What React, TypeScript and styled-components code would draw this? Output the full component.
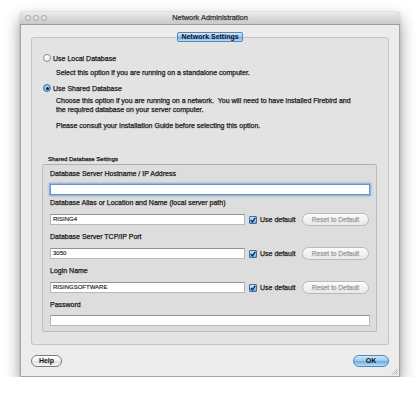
import React from "react";
import styled, { createGlobalStyle, css } from "styled-components";

const Global = createGlobalStyle`
  html, body { margin: 0; padding: 0; background: #ffffff; }
  body {
    font-family: "Liberation Sans", Arial, sans-serif;
    color: #1a1a1a;
    -webkit-text-stroke: 0.25px currentColor;
  }
`;

const Page = styled.div`
  padding: 12px 20px 0 20px;
  width: 380px;
`;

const Window = styled.div`
  position: relative;
  width: 380px;
  box-sizing: border-box;
  border: 1px solid #a4a4a4;
  border-top: none;
  border-radius: 4px 4px 0 0;
  box-shadow: 0 7px 16px rgba(0, 0, 0, 0.42), 0 0 2px rgba(0, 0, 0, 0.2);
  background: #ececec;
`;

const TitleBar = styled.div`
  height: 12px;
  display: grid;
  grid-template-columns: 1fr auto 1fr;
  align-items: center;
  background: linear-gradient(#ececec, #d6d6d6 60%, #c9c9c9);
  border-bottom: 1px solid #9a9a9a;
  border-radius: 4px 4px 0 0;
  margin: 0 -1px;
`;

const Lights = styled.div`
  display: flex;
  gap: 2px;
  padding-left: 5px;
`;

const Light = styled.span`
  width: 6px;
  height: 6px;
  border-radius: 50%;
  box-sizing: border-box;
  border: 1px solid #a9a9a9;
  background: radial-gradient(circle at 50% 35%, #f4f4f4, #cfcfcf);
`;

const Title = styled.div`
  font-size: 7.4px;
  line-height: 12px;
  color: #333;
`;

const Body = styled.div`
  padding: 7px 10px 9px 10px;
`;

const TabHeader = styled.div`
  display: flex;
  justify-content: center;
  height: 10px;
  margin-bottom: -5px;
  position: relative;
  z-index: 1;
`;

const aquaBlue = css`
  background: linear-gradient(#d2e8fb 0%, #9ccbf3 45%, #6fb1ea 55%, #b4dcfb 100%);
  border: 1px solid #5a83b6;
`;

const TabButton = styled.div`
  ${aquaBlue};
  box-sizing: border-box;
  height: 10px;
  width: 66px;
  border-radius: 2px;
  font-size: 7px;
  font-weight: bold;
  line-height: 8px;
  text-align: center;
  color: #111;
  -webkit-text-stroke: 0;
`;

const TabBox = styled.div`
  border: 1px solid #c4c4c4;
  border-radius: 3px;
  background: #e3e3e3;
  padding: 15px 11px 12px 11px;
`;

const RadioRow = styled.div<{ $gapTop?: number }>`
  display: flex;
  align-items: center;
  gap: 2px;
  height: 10px;
  font-size: 7px;
  margin-top: ${(p) => p.$gapTop ?? 0}px;
`;

const RadioDot = styled.span<{ $on?: boolean }>`
  width: 8px;
  height: 8px;
  border-radius: 50%;
  box-sizing: border-box;
  display: flex;
  align-items: center;
  justify-content: center;
  ${(p) =>
    p.$on
      ? css`
          border: 1px solid #3f6ea8;
          background: radial-gradient(circle at 50% 40%, #b9defb, #5ea6e6);
        `
      : css`
          border: 1px solid #8d8d8d;
          background: linear-gradient(#ffffff, #ececec);
        `}
`;

const RadioCenter = styled.span`
  width: 3px;
  height: 3px;
  border-radius: 50%;
  background: #14233c;
`;

const Desc = styled.p<{ $top: number; $lh?: number }>`
  margin: ${(p) => p.$top}px 0 0 13px;
  font-size: 7px;
  line-height: ${(p) => p.$lh ?? 10}px;
`;

const GroupLabel = styled.div`
  margin: 24px 0 1px 5px;
  font-size: 6px;
  line-height: 8px;
`;

const GroupBox = styled.div`
  margin-left: -1px;
  border: 1px solid #bcbcbc;
  border-top-color: #b0b0b0;
  border-radius: 2px;
  background: #dddddd;
  padding: 4px 6px 5px 7px;
`;

const Field = styled.div<{ $bottom?: number }>`
  margin-bottom: ${(p) => p.$bottom ?? 5}px;
`;

const FieldLabel = styled.div`
  font-size: 7px;
  line-height: 10px;
  height: 10px;
  margin-bottom: 5px;
`;

const Row = styled.div`
  display: flex;
  align-items: center;
  height: 15px;
  margin-top: -1px;
`;

const Input = styled.div<{ $focus?: boolean; $width?: number }>`
  box-sizing: border-box;
  height: 11px;
  ${(p) => (p.$width ? `width: ${p.$width}px;` : "flex: 1;")}
  background: #ffffff;
  border: 1px solid #b8b8b8;
  border-top-color: #929292;
  font-size: 6px;
  line-height: 9px;
  padding-left: 2px;
  color: #222;
  -webkit-text-stroke: 0.15px currentColor;
  ${(p) =>
    p.$focus &&
    css`
      border-color: #6f8fbd;
      box-shadow: 0 0 0 1px #92b6e4, 0 0 2px 1px rgba(110, 160, 225, 0.7);
    `}
`;

const Check = styled.span`
  margin-left: 4px;
  width: 8px;
  height: 8px;
  box-sizing: border-box;
  border: 1px solid #3f6ea8;
  border-radius: 1px;
  background: linear-gradient(#cde6fb, #5fa5e6);
  display: flex;
  align-items: center;
  justify-content: center;
`;

const CheckLabel = styled.span`
  margin-left: 3px;
  font-size: 7px;
  width: 36px;
  white-space: nowrap;
`;

const ResetButton = styled.div`
  margin-left: 6px;
  box-sizing: border-box;
  width: 67px;
  height: 13px;
  border-radius: 7px;
  border: 1px solid #b9b9b9;
  background: linear-gradient(#fbfbfb, #e9e9e9);
  color: #9b9b9b;
  font-size: 6.6px;
  line-height: 11px;
  text-align: center;
`;

const Footer = styled.div`
  display: flex;
  justify-content: space-between;
  align-items: center;
  margin-top: 10px;
`;

const PushButton = styled.div<{ $primary?: boolean; $w: number }>`
  box-sizing: border-box;
  width: ${(p) => p.$w}px;
  height: 12px;
  border-radius: 6px;
  font-size: 7px;
  font-weight: bold;
  line-height: 10px;
  text-align: center;
  color: #111;
  -webkit-text-stroke: 0;
  ${(p) =>
    p.$primary
      ? aquaBlue
      : css`
          border: 1px solid #7c7c7c;
          background: linear-gradient(#ffffff, #f1f1f1 50%, #e2e2e2 55%, #f7f7f7);
        `}
`;

const Grip = styled.svg`
  position: absolute;
  right: 1px;
  bottom: 1px;
`;

const CheckMark = () => (
  <svg width="6" height="6" viewBox="0 0 6 6">
    <path d="M0.8 3.1 L2.4 4.8 L5.4 0.6" fill="none" stroke="#0d1a30" strokeWidth="1.2" />
  </svg>
);

const DefaultRow = ({ value }: { value: string }) => (
  <Row>
    <Input $width={195}>{value}</Input>
    <Check>
      <CheckMark />
    </Check>
    <CheckLabel>Use default</CheckLabel>
    <ResetButton>Reset to Default</ResetButton>
  </Row>
);

export default function App() {
  return (
    <>
      <Global />
      <Page>
        <Window>
          <TitleBar>
            <Lights>
              <Light />
              <Light />
              <Light />
            </Lights>
            <Title>Network Administration</Title>
            <div />
          </TitleBar>
          <Body>
            <TabHeader>
              <TabButton>Network Settings</TabButton>
            </TabHeader>
            <TabBox>
              <RadioRow>
                <RadioDot />
                <span>Use Local Database</span>
              </RadioRow>
              <Desc $top={5}>Select this option if you are running on a standalone computer.</Desc>
              <RadioRow $gapTop={5}>
                <RadioDot $on>
                  <RadioCenter />
                </RadioDot>
                <span>Use Shared Database</span>
              </RadioRow>
              <Desc $top={3} $lh={9}>
                Choose this option if you are running on a network.&nbsp; You will need to have installed Firebird and
                <br />
                the required database on your server computer.
              </Desc>
              <Desc $top={7}>Please consult your Installation Guide before selecting this option.</Desc>
              <GroupLabel>Shared Database Settings</GroupLabel>
              <GroupBox>
                <Field $bottom={3}>
                  <FieldLabel>Database Server Hostname / IP Address</FieldLabel>
                  <Input $focus />
                </Field>
                <Field>
                  <FieldLabel>Database Alias or Location and Name (local server path)</FieldLabel>
                  <DefaultRow value="RISING4" />
                </Field>
                <Field>
                  <FieldLabel>Database Server TCP/IP Port</FieldLabel>
                  <DefaultRow value="3050" />
                </Field>
                <Field>
                  <FieldLabel>Login Name</FieldLabel>
                  <DefaultRow value="RISINGSOFTWARE" />
                </Field>
                <Field $bottom={0}>
                  <FieldLabel>Password</FieldLabel>
                  <Input />
                </Field>
              </GroupBox>
            </TabBox>
            <Footer>
              <PushButton $w={31}>Help</PushButton>
              <PushButton $w={36} $primary>
                OK
              </PushButton>
            </Footer>
          </Body>
          <Grip width="7" height="7" viewBox="0 0 7 7">
            <path d="M6.5 1 L1 6.5 M6.5 3.5 L3.5 6.5 M6.5 5.5 L5.5 6.5" stroke="#9a9a9a" strokeWidth="0.7" />
          </Grip>
        </Window>
      </Page>
    </>
  );
}
